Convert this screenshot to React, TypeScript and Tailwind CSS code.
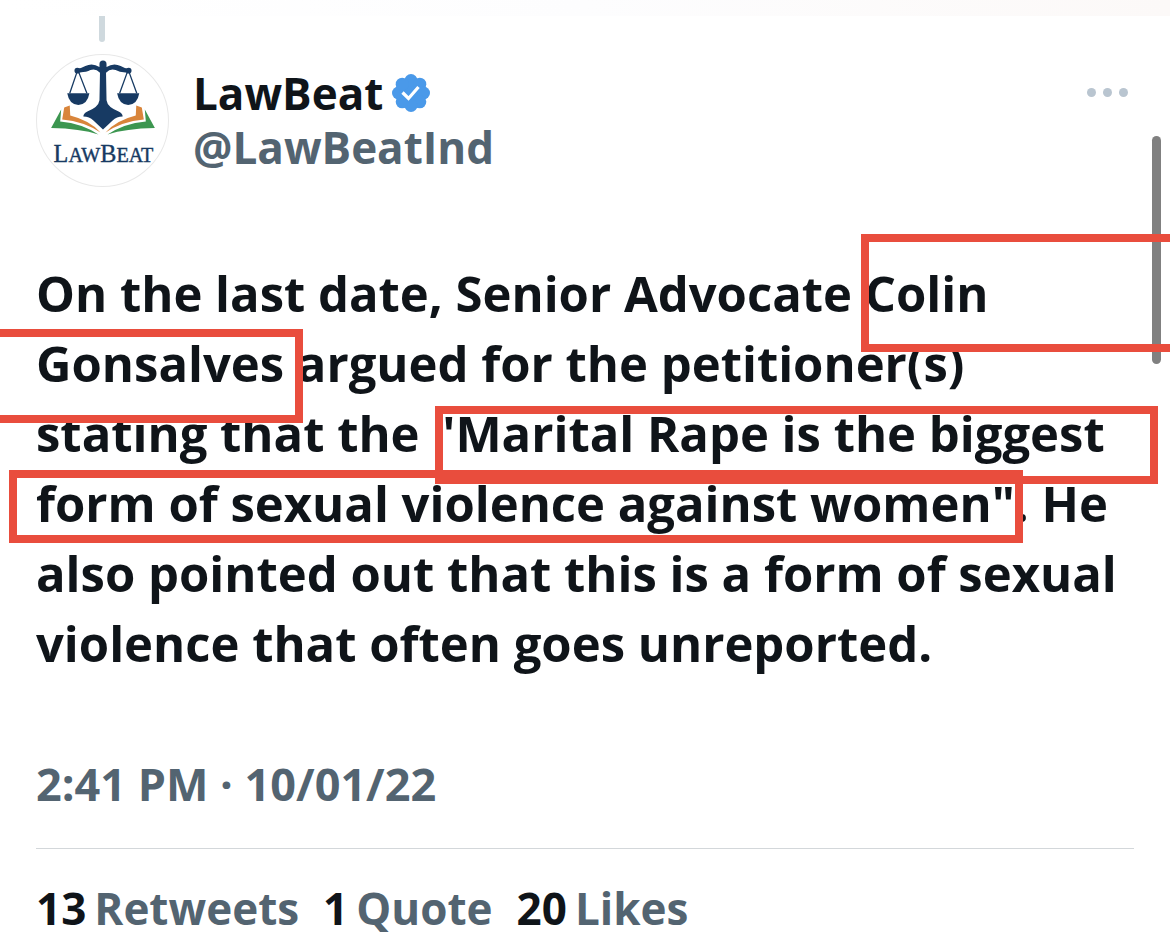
const tweetLines = [
  'On the last date, Senior Advocate Colin',
  'Gonsalves argued for the petitioner(s)',
  'stating that the "Marital Rape is the biggest',
  'form of sexual violence against women". He',
  'also pointed out that this is a form of sexual',
  'violence that often goes unreported.',
]

const stats = [
  { count: 13, label: 'Retweets' },
  { count: 1, label: 'Quote' },
  { count: 20, label: 'Likes' },
]

function Avatar() {
  return (
    <svg viewBox="0 0 132 132" className="size-[133px] shrink-0" role="img" aria-label="LawBeat">
      <circle cx="66" cy="66" r="65.5" fill="#fff" stroke="#e8e8e8" />
      <g fill="#173a63">
        <path d="M63 10 Q63 6.500 66.500 6.500 Q70 6.500 70 10 V13 Q77 8.500 84 12 Q89 15 93 15 V18 Q84 19 79 16 Q74 14 69.500 18.500 L70 46 Q71 53 82 57 Q86 59 86 62 Q80 62 76 66 L66.500 75 L57 66 Q53 62 47 62 Q47 59 51 57 Q62 53 63 46 L63.500 18.500 Q59 14 54 16 Q49 19 39 18 V15 Q44 15 49 12 Q56 8.500 63 13 Z" />
        <path d="M31 39 H53 Q51 50.500 42 50.500 Q33 50.500 31 39 Z" />
        <path d="M80.500 39 H102.500 Q100.500 50.500 91.500 50.500 Q82.500 50.500 80.500 39 Z" />
        <circle cx="41" cy="16.500" r="2.800" />
        <circle cx="92" cy="16.500" r="2.800" />
      </g>
      <path d="M41 17 L33.500 39 M42 17 L50.500 39 M91 17 L83 39 M92 17 L100 39" stroke="#173a63" strokeWidth="1.300" fill="none" />
      <path d="M28 53 L33.500 51 L34 61 Q54 66 64 78 Q48 67 26 65 Z M105 53 L99.500 51 L99 61 Q79 66 69 78 Q85 67 107 65 Z" fill="#d9853b" />
      <path d="M25 55 L24 67 Q46 69 62 80 Q44 74 15 73.500 Z M108 55 L109 67 Q87 69 71 80 Q89 74 118 73.500 Z" fill="#3c9650" />
      <text x="67" y="107" textAnchor="middle" fill="#173a63" fontFamily="Liberation Serif, serif" fontSize="24" fontWeight="400" stroke="#173a63" strokeWidth="0.4">
        L<tspan fontSize="20">AW</tspan>B<tspan fontSize="20">EAT</tspan>
      </text>
    </svg>
  )
}

function VerifiedBadge() {
  return (
    <svg viewBox="0 0 40 40" className="size-10" role="img" aria-label="Verified account">
      <g fill="#4a99e9">
        <circle cx="20" cy="20" r="15" />
        <circle cx="20" cy="7.500" r="6.500" />
        <circle cx="28.800" cy="11.200" r="6.500" />
        <circle cx="32.500" cy="20" r="6.500" />
        <circle cx="28.800" cy="28.800" r="6.500" />
        <circle cx="20" cy="32.500" r="6.500" />
        <circle cx="11.200" cy="28.800" r="6.500" />
        <circle cx="7.500" cy="20" r="6.500" />
        <circle cx="11.200" cy="11.200" r="6.500" />
      </g>
      <path d="M11.500 19.500 L17.500 25.500 L27.500 14" fill="none" stroke="#fff" strokeWidth="3.200" />
    </svg>
  )
}

export default function App() {
  return (
    <div className="relative overflow-hidden bg-white font-['Open_Sans',sans-serif] font-bold text-[#0f1419]">
      <div className="h-4 bg-linear-to-r from-white via-[#fdfdfe] to-[#fcf9f8]" />
      <main className="px-9 pb-2">
        <div className="ml-[63px] h-[26px] w-1.5 rounded-b-full bg-[#cfd9de]" />

        <header className="mt-3 flex items-start">
          <Avatar />
          <div className="ml-6 flex-1 pt-3">
            <div className="flex items-center gap-2">
              <span className="text-[44px] leading-[54px]">LawBeat</span>
              <VerifiedBadge />
            </div>
            <a href="#" className="block text-[44px] leading-[54px] text-[#536471]">@LawBeatInd</a>
          </div>
          <button aria-label="More" className="mt-8 mr-1.5 flex gap-[7px] py-0.5">
            <span className="size-[9px] rounded-full bg-[#b9c5d0]" />
            <span className="size-[9px] rounded-full bg-[#b9c5d0]" />
            <span className="size-[9px] rounded-full bg-[#b9c5d0]" />
          </button>
        </header>

        <p className="mt-[71px] text-[49px] leading-[70px] whitespace-nowrap">
          {tweetLines.map((line) => (
            <span key={line} className="block">{line}</span>
          ))}
        </p>

        <time className="mt-[76px] block text-[45px] leading-[60px] text-[#536471]">
          2:41 PM · 10/01/22
        </time>

        <hr className="mt-[34px] border-[#d3d7da]" />

        <div className="mt-[29px] flex gap-6 text-[44px] leading-[60px]">
          {stats.map((stat) => (
            <a key={stat.label} href="#" className="flex gap-2">
              <span>{stat.count}</span>
              <span className="text-[#536471]">{stat.label}</span>
            </a>
          ))}
        </div>
      </main>

      {/* Scroll indicator */}
      <div className="absolute top-[136px] right-[9px] h-[228px] w-[9px] rounded-full bg-[#808080]" />

      {/* Highlight boxes */}
      <div className="absolute top-[234px] -right-3 left-[861px] h-[118px] border-8 border-[#e94d3d]" />
      <div className="absolute top-[329px] -left-3 h-[94px] w-[315px] border-8 border-[#e94d3d]" />
      <div className="absolute top-[406px] right-3 left-[435px] h-[78px] border-8 border-[#e94d3d]" />
      <div className="absolute top-[470px] left-[9px] h-[73px] w-[1014px] border-8 border-[#e94d3d]" />
    </div>
  )
}
